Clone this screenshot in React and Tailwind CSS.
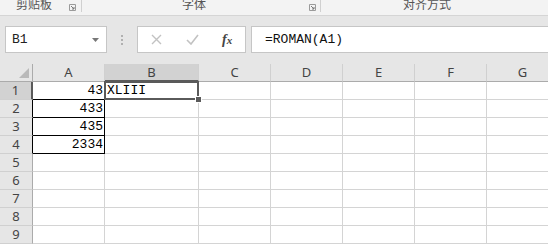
import React from 'react';

const cols = ['A', 'B', 'C', 'D', 'E', 'F', 'G'];
const rows = [1, 2, 3, 4, 5, 6, 7, 8, 9];
const data = {
    1: { A: '43', B: 'XLIII' },
    2: { A: '433' },
    3: { A: '435' },
    4: { A: '2334' },
};

const Launcher = () => (
    <svg width="7" height="7" viewBox="0 0 7 7" className="block">
        <path d="M0.5 0.5 H6.5 V6.5 H0.5 Z" fill="none" stroke="#9a9a9a" strokeWidth="1" />
        <path d="M2 2 L5 5 M3 5 H5 V3" fill="none" stroke="#7a7a7a" strokeWidth="1" />
    </svg>
);

const Ribbon = () => (
    <div className="flex h-[16px] overflow-hidden bg-[#f3f3f3] border-b border-[#d5d5d5] text-[12px] text-[#555] font-['Noto_Sans_CJK_SC',sans-serif]">
        <div className="flex w-[82px] items-start justify-between pl-[16px] pr-[5px] border-r border-[#d0d0d0] h-[12px]">
            <span className="leading-[12px] -mt-[2px]">剪贴板</span>
            <span className="mt-[4px]"><Launcher /></span>
        </div>
        <div className="flex w-[239px] items-start justify-between pl-[100px] pr-[4px] border-r border-[#d0d0d0] h-[12px]">
            <span className="leading-[12px] -mt-[2px]">字体</span>
            <span className="mt-[4px]"><Launcher /></span>
        </div>
        <div className="flex items-start pl-[82px] h-[12px]">
            <span className="leading-[12px] -mt-[2px]">对齐方式</span>
        </div>
    </div>
);

const FormulaBar = () => (
    <div className="flex h-[48px] bg-[#e6e6e6] pt-[10px] pl-[5px]">
        <div className="flex h-[27px] w-[102px] items-center justify-between bg-white border border-[#c6c6c6] pl-[6px] pr-[7px]">
            <span className="font-['Liberation_Mono',monospace] text-[13px] text-[#222]">B1</span>
            <svg width="7" height="4" viewBox="0 0 7 4"><path d="M0 0 H7 L3.5 4 Z" fill="#777" /></svg>
        </div>
        <div className="flex w-[30px] h-[27px] flex-col items-center justify-center gap-[2px]">
            <span className="w-[2px] h-[2px] bg-[#b0b0b0]" />
            <span className="w-[2px] h-[2px] bg-[#b0b0b0]" />
            <span className="w-[2px] h-[2px] bg-[#b0b0b0]" />
        </div>
        <div className="flex h-[27px] w-[109px] items-center bg-white border border-[#c6c6c6]">
            <span className="w-[38px] flex justify-center">
                <svg width="11" height="11" viewBox="0 0 11 11"><path d="M1 1 L10 10 M10 1 L1 10" stroke="#c2c2c2" strokeWidth="1.4" /></svg>
            </span>
            <span className="w-[34px] flex justify-center">
                <svg width="13" height="11" viewBox="0 0 13 11"><path d="M1 6 L5 10 L12 1" fill="none" stroke="#c2c2c2" strokeWidth="1.6" /></svg>
            </span>
            <span className="w-[36px] flex items-baseline justify-center font-['Liberation_Serif',serif] italic font-bold text-[#444]">
                <span className="text-[14px] leading-none">f</span>
                <span className="text-[11px] leading-none">x</span>
            </span>
        </div>
        <div className="ml-[5px] flex h-[27px] flex-1 items-center bg-white border border-[#c6c6c6] border-r-0 pl-[13px]">
            <span className="font-['Liberation_Mono',monospace] text-[13px] text-[#111]">=ROMAN(A1)</span>
        </div>
    </div>
);

const Grid = () => (
    <div className="grid grid-cols-[33px_72px_94px_72px_72px_72px_72px_72px] font-['Noto_Sans',sans-serif] text-[13px] text-[#444]">
        <div className="relative h-[18px] bg-[#e6e6e6] border-r border-b border-[#ababab]">
            <svg width="10" height="10" viewBox="0 0 10 10" className="absolute right-[3px] bottom-[3px]"><path d="M10 0 V10 H0 Z" fill="#b9b9b9" /></svg>
        </div>
        {cols.map(c => (
            <div
                key={c}
                className={`flex h-[18px] items-center justify-center leading-none border-r border-[#d0d0d0] ${c === 'B' ? 'bg-[#d2d2d2] border-b-2 border-b-[#5a5a5a]' : 'bg-[#e6e6e6] border-b border-b-[#ababab]'}`}
            >
                {c}
            </div>
        ))}
        {rows.map(r => (
            <React.Fragment key={r}>
                <div
                    className={`flex h-[18px] items-center justify-center leading-none border-b border-[#d0d0d0] ${r === 1 ? 'bg-[#d2d2d2] border-r-2 border-r-[#5a5a5a]' : r <= 4 ? 'bg-[#e6e6e6] border-r border-r-black' : 'bg-[#e6e6e6] border-r border-r-[#ababab]'}`}
                >
                    {r}
                </div>
                {cols.map(c => {
                    const v = data[r] && data[r][c];
                    const boxed = c === 'A' && r <= 4;
                    const sel = c === 'B' && r === 1;
                    return (
                        <div
                            key={c}
                            className={`relative flex h-[18px] items-end pb-[1px] bg-white font-['Liberation_Mono',monospace] text-[13px] leading-[15px] text-black border-r border-b ${sel ? 'z-10' : ''} ${boxed ? 'border-black justify-end pr-[1px]' : 'border-[#d4d4d4] pl-[2px]'}`}
                        >
                            {v}
                            {sel && (
                                <>
                                    <div className="absolute -left-[1px] -top-[1px] -right-[1px] -bottom-[1px] border-2 border-[#5a5a5a]" />
                                    <div className="absolute -right-[4px] -bottom-[4px] w-[5px] h-[5px] bg-[#5a5a5a] border border-white box-content" />
                                </>
                            )}
                        </div>
                    );
                })}
            </React.Fragment>
        ))}
    </div>
);

export default function App() {
    return (
        <div className="w-[548px] h-[244px] overflow-hidden bg-white">
            <Ribbon />
            <FormulaBar />
            <Grid />
        </div>
    );
}
